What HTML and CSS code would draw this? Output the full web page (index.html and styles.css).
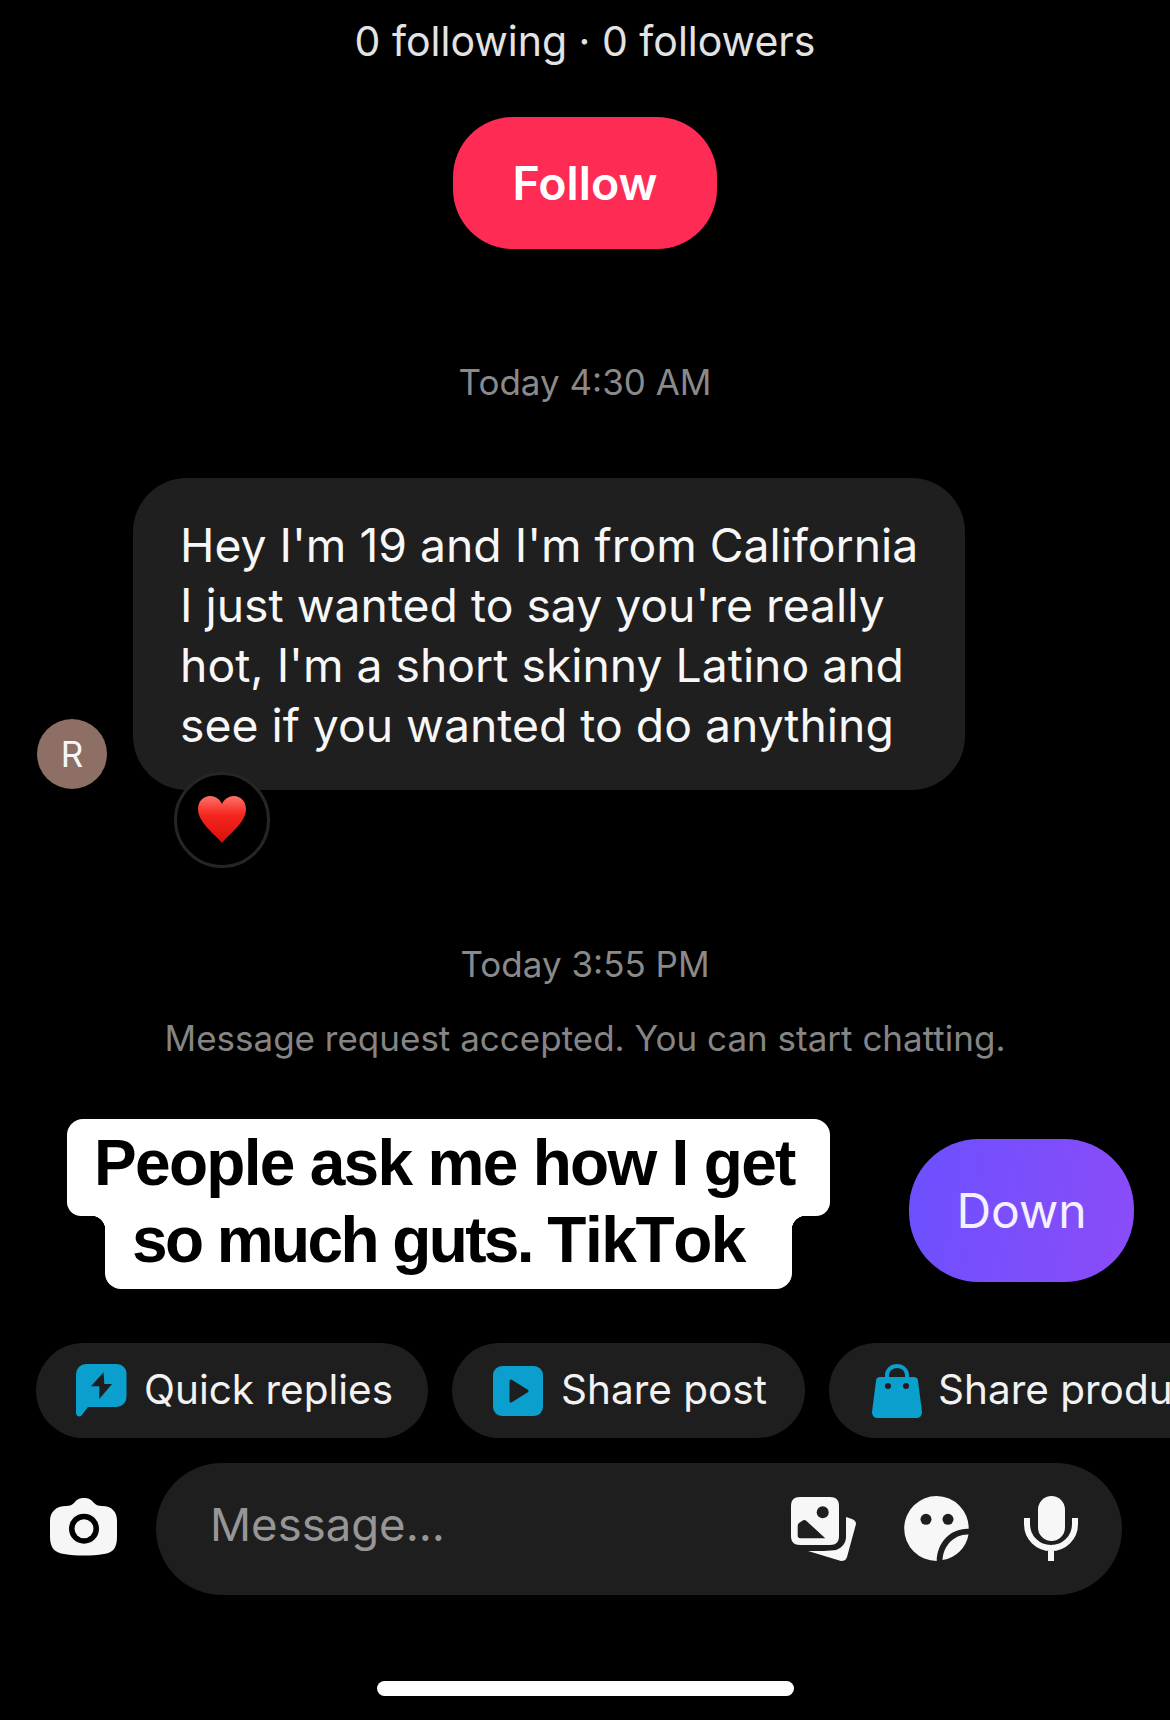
FILE: index.html
```html
<!DOCTYPE html>
<html lang="en">
<head>
<meta charset="utf-8">
<title>Chat</title>
<link rel="stylesheet" href="styles.css">
</head>
<body>
<main class="screen">
  <p class="stats">0 following · 0 followers</p>
  <button class="follow">Follow</button>
  <p class="time time-first">Today 4:30 AM</p>

  <section class="message">
    <div class="avatar">R</div>
    <div class="bubble-wrap">
      <div class="bubble">Hey I'm 19 and I'm from California<br>I just wanted to say you're really<br>hot, I'm a short skinny Latino and<br>see if you wanted to do anything</div>
      <div class="reaction">
        <svg width="50" height="50" viewBox="0 0 50 50">
          <defs>
            <linearGradient id="hg" x1="0" y1="0" x2="0" y2="1"><stop offset="0" stop-color="#ff7266"/><stop offset=".4" stop-color="#f5261f"/><stop offset="1" stop-color="#d80f0c"/></linearGradient>
          </defs>
          <path fill="url(#hg)" d="M25 48C19 40 1 28 1 14 1 6 7 1 13 1c5 0 10 3 12 8 2-5 7-8 12-8 6 0 12 5 12 13 0 14-18 26-24 34z"/>
        </svg>
      </div>
    </div>
  </section>

  <p class="time time-second">Today 3:55 PM</p>
  <p class="notice">Message request accepted. You can start chatting.</p>

  <section class="video-row">
    <div class="caption">
      <span class="cap-line cap-one">People ask me how I get</span>
      <span class="cap-line cap-two">so much guts. <span class="cap-brand">TikTok</span></span>
    </div>
    <button class="down">Down</button>
  </section>

  <nav class="chips">
    <div class="chip chip-a">
      <svg class="chip-icon" width="51" height="54" viewBox="0 0 51 54"><path fill="#0a9fcc" d="M10 0H41a9.500 9.500 0 0 1 9.500 9.500V33a10 10 0 0 1-10 10H12L5.500 51.500C4 53.500 0 52.500 0 49V10A10 10 0 0 1 10 0z"/><path fill="#1e1e1e" d="M27.600 8.300 15 22.300h8.300V35L36 20h-7.700z"/></svg>
      <span class="chip-label">Quick replies</span>
    </div>
    <div class="chip chip-b">
      <svg class="chip-icon" width="50" height="50" viewBox="0 0 50 50"><rect width="50" height="50" rx="9" fill="#0a9fcc"/><path fill="#1e1e1e" stroke="#1e1e1e" stroke-width="3" stroke-linejoin="round" d="M18 15v20l16-10z"/></svg>
      <span class="chip-label">Share post</span>
    </div>
    <div class="chip chip-c">
      <svg class="chip-icon" width="50" height="54" viewBox="0 0 50 54"><path fill="none" stroke="#0a9fcc" stroke-width="4" d="M15 15v-4a10 9 0 0 1 20 0v4"/><path fill="#0a9fcc" d="M8 13h34c2 0 4 1 4 4l4 31c0 3-2 6-5 6H5c-3 0-5-3-5-6l4-31c0-3 2-4 4-4z"/><circle cx="16" cy="22" r="3" fill="#1e1e1e"/><circle cx="34" cy="22" r="3" fill="#1e1e1e"/></svg>
      <span class="chip-label">Share product</span>
    </div>
  </nav>

  <section class="composer">
    <svg class="camera" width="68" height="58" viewBox="0 0 68 58"><path fill="#f6f6f6" d="M24 5C27 1 30 0 34 0s7 1 10 5c2 2 4 3 8 3 10 0 15 6 15 15v16c0 12-5 16-13 17-13 2-27 2-40 0C6 55 0 51 0 39V23C0 14 6 8 16 8c4 0 6-1 8-3z"/><circle cx="34" cy="30.700" r="15" fill="#000"/><circle cx="34" cy="30.700" r="9.500" fill="#f6f6f6"/></svg>
    <div class="input">
      <span class="placeholder">Message...</span>
      <div class="input-icons">
        <svg width="65" height="66" viewBox="0 0 65 66"><path fill="#f7f7f7" d="M55 21l6 2c3 1 4 3 4 5L56 61c-1 3-3 4-6 4L17 55c10 0 22 0 28-1 6-2 10-7 10-13z"/><path fill="#f7f7f7" d="M9 1h30c6 0 9 3 9 9v30c0 6-3 9-9 9H9c-6 0-9-3-9-9V10c0-6 3-9 9-9z"/><path fill="#1e1e1e" d="M34.300 42.300H9.500c-2 0-2.800-1-2.800-2.800V30c0-1.500.8-2.500 1.700-3.200L11 25c1.500-1.200 3-1.200 4.500 0z"/><circle cx="31.700" cy="16.300" r="6" fill="#1e1e1e"/></svg>
        <svg width="66" height="66" viewBox="0 0 66 66"><path fill="#f7f7f7" d="M32.700 0A32.300 32.300 0 0 1 64.700 32.700C47 32 33 46 32.700 65A32.300 32.300 0 0 1 32.700 0z"/><path fill="#f7f7f7" d="M64.500 38.500C50 38 39 50 38.500 64 52 62 62 52 64.500 38.500z"/><circle cx="22" cy="23.300" r="5.500" fill="#1e1e1e"/><circle cx="44" cy="23.300" r="5.500" fill="#1e1e1e"/></svg>
        <svg class="mic" width="54" height="66" viewBox="0 0 54 66"><rect x="14" y="0" width="27" height="45" rx="13.500" fill="#f7f7f7"/><path fill="none" stroke="#f7f7f7" stroke-width="6" d="M3 22v6c0 14 11 24 24 24s24-10 24-24v-6M27 52v13"/></svg>
      </div>
    </div>
  </section>

  <div class="home-bar"></div>
</main>
</body>
</html>
```
FILE: styles.css
```css
* { box-sizing: border-box; }
html, body { margin: 0; padding: 0; background: #000; }
body { width: 1170px; height: 1720px; overflow: hidden; }
.screen {
  width: 1170px;
  height: 1720px;
  display: flex;
  flex-direction: column;
  color: #f5f5f5;
  font-family: Inter, "Noto Sans", sans-serif;
  overflow: hidden;
}
p { margin: 0; text-align: center; }
button { border: 0; padding: 0; font-family: inherit; }

.stats { margin-top: 15px; height: 52px; line-height: 52px; font-size: 41px; color: #e3e3e3; }

.follow {
  align-self: center;
  margin-top: 50px;
  width: 264px;
  height: 132px;
  border-radius: 60px;
  background: #fe2c55;
  color: #fff;
  font-size: 46.500px;
  font-weight: 600;
}

.time { font-size: 35px; line-height: 44px; color: #8a8a8a; }
.time-first { margin-top: 111px; }

.message { display: flex; align-items: flex-start; margin-top: 74px; padding-left: 37px; }
.avatar {
  width: 70px;
  height: 70px;
  margin-top: 241px;
  border-radius: 50%;
  background: #8e6f66;
  color: #f7f7f7;
  font-size: 35px;
  line-height: 70px;
  text-align: center;
}
.bubble-wrap { margin-left: 26px; }
.bubble {
  width: 832px;
  height: 312px;
  padding: 37px 0 0 47px;
  border-radius: 54px;
  background: #1f1f1f;
  font-size: 46.300px;
  line-height: 60px;
  color: #f7f7f7;
  white-space: nowrap;
}
.reaction {
  position: relative;
  width: 96px;
  height: 96px;
  margin: -18px 0 0 41px;
  border: 3px solid #262626;
  border-radius: 50%;
  background: #000;
  display: flex;
  align-items: center;
  justify-content: center;
}

.time-second { margin-top: 74px; }
.notice { margin-top: 30px; margin-bottom: 1px; font-size: 35px; line-height: 44px; color: #858585; }

.video-row { display: flex; align-items: flex-start; margin-top: 58px; padding-left: 67px; }
.caption { width: 763px; display: flex; flex-direction: column; align-items: flex-start; }
.cap-line {
  display: block;
  position: relative;
  background: #fff;
  color: #000;
  font-family: "Liberation Sans", Arial, sans-serif;
  font-weight: 700;
  font-size: 64px;
  letter-spacing: -1.700px;
  white-space: nowrap;
}
.cap-one { width: 763px; height: 97px; line-height: 88px; padding-left: 27px; border-radius: 16px 16px 14px 14px; }
.cap-two { width: 687px; height: 73px; line-height: 48px; margin-left: 38px; padding-left: 27px; letter-spacing: -2.600px; border-radius: 0 0 16px 16px; }
.cap-brand { letter-spacing: -1.400px; font-kerning: none; }
.cap-two::before, .cap-two::after {
  content: "";
  position: absolute;
  top: 0;
  width: 14px;
  height: 14px;
}
.cap-two::before { left: -14px; background: radial-gradient(circle at 0 100%, #000 14px, #fff 14.500px); }
.cap-two::after { right: -14px; background: radial-gradient(circle at 100% 100%, #000 14px, #fff 14.500px); }

.down {
  margin: 20px 0 0 79px;
  width: 225px;
  height: 143px;
  border-radius: 70px;
  background: linear-gradient(100deg, #6c50ff, #8b4cf8);
  color: #f4f0ff;
  font-size: 48px;
}

.chips { display: flex; gap: 24px; margin-top: 54px; padding-left: 36px; }
.chip {
  flex: none;
  height: 95px;
  border-radius: 48px;
  background: #1e1e1e;
  display: flex;
  align-items: center;
  gap: 17px;
  font-size: 40.500px;
  color: #f2f2f2;
  white-space: nowrap;
}
.chip-label { padding-bottom: 2px; }
.chip-a { width: 392px; padding-left: 40px; }
.chip-b { width: 353px; padding-left: 41px; gap: 18px; }
.chip-c { width: 420px; padding-left: 43px; gap: 16px; }
.chip-icon { flex: none; }

.composer { display: flex; align-items: center; margin-top: 25px; padding-left: 50px; }
.camera { flex: none; margin-bottom: 4px; }
.input {
  flex: none;
  margin-left: 38px;
  width: 966px;
  height: 132px;
  border-radius: 66px;
  background: #1e1e1e;
  display: flex;
  align-items: center;
  justify-content: space-between;
  padding: 0 44px 0 54px;
}
.placeholder { padding-bottom: 10px; font-size: 45.500px; color: #969696; }
.input-icons { display: flex; align-items: center; gap: 48px; }
.mic { margin-left: 6px; }

.home-bar {
  align-self: center;
  margin-top: 86px;
  width: 417px;
  height: 15px;
  border-radius: 8px;
  background: #fff;
}
```
